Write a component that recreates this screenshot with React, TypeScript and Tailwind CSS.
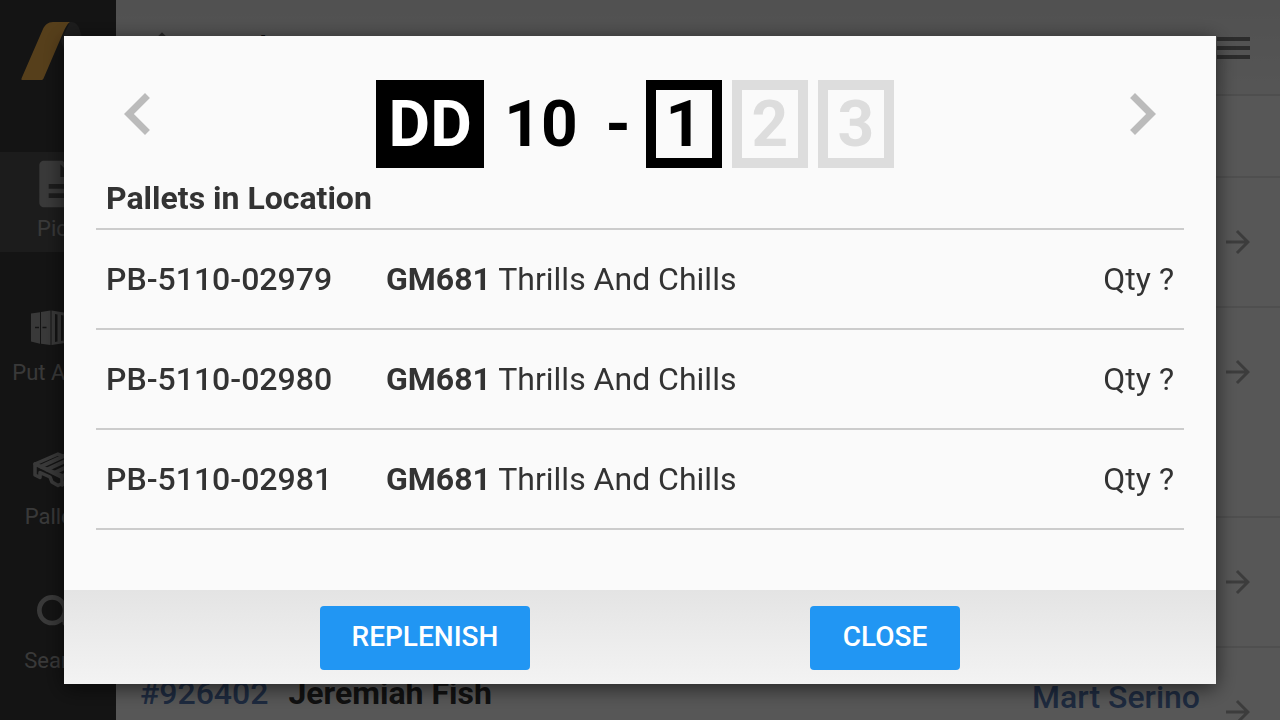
import React, { useState } from "react";
import {
  MdArrowUpward,
  MdArrowForward,
  MdChevronLeft,
  MdChevronRight,
  MdDescription,
  MdSearch,
} from "react-icons/md";

interface Pallet {
  id: string;
  sku: string;
  name: string;
  qty: string;
}

const pallets: Pallet[] = [
  { id: "PB-5110-02979", sku: "GM681", name: "Thrills And Chills", qty: "?" },
  { id: "PB-5110-02980", sku: "GM681", name: "Thrills And Chills", qty: "?" },
  { id: "PB-5110-02981", sku: "GM681", name: "Thrills And Chills", qty: "?" },
];

const levels = [1, 2, 3];

const ContainerIcon = () => (
  <svg viewBox="0 0 56 56" className="size-14" fill="currentColor">
    <path d="M1 13.5 10 12.300v31.400L1 41.500z" />
    <path d="M11 12 20.500 10.500v34.500L11 43.700z" />
    <path
      fillRule="evenodd"
      d="M21.500 10.500 55 16v24L21.500 45zM25 14v28l2.500-.5v-27zM31 15v26l2.500-.5v-25zM37 16v24l2.500-.5V16.500zM43 17v22l2.500-.5v-21zM49 18v20l2.500-.5v-19z"
    />
    <path
      d="M5 27.500h4M12.500 27.500h4"
      stroke="#3b3b3b"
      strokeWidth="1.500"
      fill="none"
    />
  </svg>
);

const PalletIcon = () => (
  <svg
    viewBox="0 0 56 56"
    className="size-14"
    fill="none"
    stroke="currentColor"
    strokeWidth="3.500"
    strokeLinejoin="round"
    strokeLinecap="round"
  >
    <path d="M5 20 28 10 52 20 31 33z" />
    <path d="M11 22.500 36 11M17 25.500 42 14M24 29 47 18" strokeWidth="3.800" />
    <path d="M5 20v11l5 2.500v-5l10 4.500 2 5 6 3.500 4-2v-8L5 20M32 41l4-3v-4l9-5v4l7-4v-9" />
  </svg>
);

const Logo = () => (
  <svg viewBox="0 0 76 60" className="h-[60px] w-[76px]">
    <path d="M50 1c5 0 7 2 9 6l17 52H55L41 20z" fill="#555555" />
    <path
      d="M2 59h19c1 0 2-.5 2.500-1.500L43 12c2-5 4-9 7-11H33c-5 0-8 3-10 7L1.700 57c-.5 1-.4 2 .3 2z"
      fill="#fdb94f"
    />
  </svg>
);

const navItems = [
  { label: "Pick", icon: <MdDescription className="size-14" />, active: true },
  { label: "Put Away", icon: <ContainerIcon />, active: false },
  { label: "Pallets", icon: <PalletIcon />, active: false },
  { label: "Search", icon: <MdSearch className="size-14" />, active: false },
];

const Sidebar = () => (
  <nav className="flex w-[116px] shrink-0 flex-col bg-[#3b3b3b] text-[#a8a8a8]">
    <div className="h-[152px] pl-5 pt-[21px]">
      <Logo />
    </div>
    <div className="flex flex-col gap-11">
      {navItems.map((item) => (
        <a
          key={item.label}
          href="#"
          className={
            item.active
              ? "flex h-[100px] flex-col items-center bg-[#545454] pt-1"
              : "flex h-[100px] flex-col items-center pt-1"
          }
        >
          {item.icon}
          <span className="text-[22px] leading-[34px]">{item.label}</span>
        </a>
      ))}
    </div>
  </nav>
);

const OrderRow = ({
  order,
  customer,
  store,
  status,
  last,
}: {
  order?: string;
  customer?: string;
  store?: string;
  status?: string;
  last?: boolean;
}) => (
  <li
    className={
      last
        ? "flex h-32 items-center pl-6 pr-6"
        : "flex h-[130px] items-center border-b-2 border-[#e8e8e8] pl-6 pr-6"
    }
  >
    <div className="flex h-full flex-1 items-start gap-5 pt-6 text-[32px] leading-[42px]">
      <span className="font-medium text-[#587cb8]">{order}</span>
      <span className="font-bold text-[#333]">{customer}</span>
    </div>
    <div className="h-full pr-5 pt-7 text-right text-[32px] leading-[42px]">
      <p className="font-medium text-[#587cb8]">{store}</p>
      <p className="text-[#333]">{status}</p>
    </div>
    <MdArrowForward className="size-9 text-[#b0b0b0]" />
  </li>
);

const Orders = () => (
  <main className="min-w-0 flex-1 bg-white">
    <header className="flex h-24 items-center justify-between border-b-2 border-[#e4e4e4] bg-linear-to-b from-[#ececec] to-[#fafafa] pl-6 pr-[30px]">
      <h1 className="flex items-center gap-8 text-[32px] font-medium text-[#222]">
        <MdArrowUpward className="size-11 text-[#777]" />
        Orders
      </h1>
      <button aria-label="Menu" className="flex flex-col gap-[5px] pt-0.5">
        <span className="h-1 w-[33px] bg-[#808080]" />
        <span className="h-1 w-[33px] bg-[#808080]" />
        <span className="h-1 w-[33px] bg-[#808080]" />
      </button>
    </header>
    <div className="h-[82px] border-b-2 border-[#e8e8e8]" />
    <ul>
      <OrderRow />
      <OrderRow last />
    </ul>
    <div className="h-[82px] border-b-2 border-[#e8e8e8]" />
    <ul>
      <OrderRow />
      <OrderRow
        order="#926402"
        customer="Jeremiah Fish"
        store="Mart Serino"
        status="of needed"
      />
    </ul>
  </main>
);

const LocationModal = ({ onClose }: { onClose: () => void }) => {
  const [level, setLevel] = useState(1);

  return (
    <div className="fixed inset-0 flex items-center justify-center bg-black/66">
      <div
        role="dialog"
        aria-modal="true"
        className="flex h-[90%] w-[90%] flex-col bg-[#fafafa] text-[#333] shadow-[0_4px_20px_rgba(0,0,0,0.6)]"
      >
        <div className="flex-1 overflow-auto px-8 pt-9">
          <div className="flex items-start justify-between">
            <button aria-label="Previous location" className="text-[#bbb]">
              <MdChevronLeft className="size-[84px]" />
            </button>
            <div className="mt-2 flex h-[88px] text-[64px] font-bold leading-[90px] text-black">
              <span className="w-[108px] bg-black text-center text-white">DD</span>
              <span className="px-5">10</span>
              <span className="pl-2 pr-[15px]">-</span>
              {levels.map((l) => (
                <button
                  key={l}
                  onClick={() => setLevel(l)}
                  className={
                    l === level
                      ? "mr-[10px] w-[76px] border-10 border-black leading-[70px]"
                      : "mr-[10px] w-[76px] border-10 border-[#ddd] leading-[70px] text-[#ddd]"
                  }
                >
                  {l}
                </button>
              ))}
            </div>
            <button aria-label="Next location" className="text-[#bbb]">
              <MdChevronRight className="size-[84px]" />
            </button>
          </div>

          <table className="w-full text-left text-[32px]">
            <thead>
              <tr className="h-[61px] border-b-2 border-[#ccc]">
                <th colSpan={3} className="px-[10px] font-bold">
                  Pallets in Location
                </th>
              </tr>
            </thead>
            <tbody>
              {pallets.map((pallet) => (
                <tr key={pallet.id} className="h-[100px] border-b-2 border-[#ccc]">
                  <td className="w-[280px] px-[10px] font-medium">{pallet.id}</td>
                  <td className="px-[10px]">
                    <b>{pallet.sku}</b> {pallet.name}
                  </td>
                  <td className="px-[10px] text-right">Qty {pallet.qty}</td>
                </tr>
              ))}
            </tbody>
          </table>
        </div>

        <div className="flex h-[94px] items-start justify-evenly gap-6 bg-linear-to-b from-[#e4e4e4] to-[#f3f3f3] pt-4">
          <button className="h-16 w-[210px] rounded bg-[#2196f3] pb-0.5 text-[28px] font-medium text-white">
            REPLENISH
          </button>
          <button
            onClick={onClose}
            className="h-16 w-[150px] rounded bg-[#2196f3] pb-0.5 text-[28px] font-medium text-white"
          >
            CLOSE
          </button>
        </div>
      </div>
    </div>
  );
};

const App = () => {
  const [isOpen, setIsOpen] = useState(true);

  return (
    <div className="flex h-screen overflow-hidden font-[Roboto,sans-serif]">
      <Sidebar />
      <Orders />
      {isOpen && <LocationModal onClose={() => setIsOpen(false)} />}
    </div>
  );
};

export default App;
